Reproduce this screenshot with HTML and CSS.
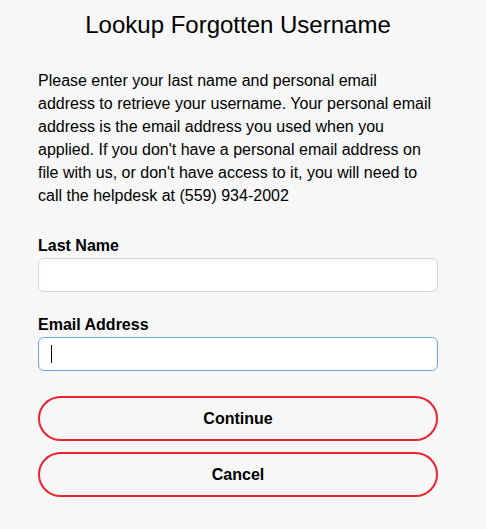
FILE: index.html
```html
<!DOCTYPE html>
<html>
<head>
<meta charset="utf-8">
<link rel="stylesheet" href="styles.css">
</head>
<body>
<main class="page">
  <h1 class="title">Lookup Forgotten Username</h1>
  <p class="intro">Please enter your last name and personal email address to retrieve your username. Your personal email address is the email address you used when you applied. If you don't have a personal email address on file with us, or don't have access to it, you will need to call the helpdesk at (559) 934-2002</p>
  <form class="form">
    <label class="field">
      <span class="label">Last Name</span>
      <span class="input"></span>
    </label>
    <label class="field">
      <span class="label">Email Address</span>
      <span class="input focused"><span class="caret"></span></span>
    </label>
    <div class="actions">
      <button type="button" class="btn">Continue</button>
      <button type="button" class="btn">Cancel</button>
    </div>
  </form>
</main>
</body>
</html>
```
FILE: styles.css
```css
html, body {
  margin: 0;
  padding: 0;
  background: #f7f7f7;
}
body {
  font-family: "Liberation Sans", Arial, sans-serif;
  color: #000;
}
.page {
  width: 400px;
  margin: 0 0 0 38px;
  padding: 9px 0 0 0;
}
.title {
  margin: 0;
  font-size: 24px;
  font-weight: normal;
  text-align: center;
  line-height: 32px;
}
.intro {
  margin: 28px 0 0 0;
  font-size: 16px;
  line-height: 23px;
}
.form {
  margin-top: 29px;
  display: flex;
  flex-direction: column;
}
.field {
  display: flex;
  flex-direction: column;
  margin-bottom: 23px;
}
.label {
  font-weight: bold;
  font-size: 16px;
  line-height: 19px;
  margin-bottom: 3px;
}
.input {
  display: flex;
  align-items: center;
  box-sizing: border-box;
  height: 34px;
  background: #fff;
  border: 1px solid #cdd6e3;
  border-radius: 6px;
  padding: 0 12px;
}
.input.focused {
  border-color: #6ba6e3;
}
.caret {
  width: 1px;
  height: 18px;
  background: #000;
}
.actions {
  display: flex;
  flex-direction: column;
  gap: 11px;
  margin-top: 2px;
}
.btn {
  box-sizing: border-box;
  height: 45px;
  width: 100%;
  background: transparent;
  border: 2px solid #ec2330;
  border-radius: 23px;
  font-family: "Liberation Sans", Arial, sans-serif;
  font-weight: bold;
  font-size: 16px;
  color: #000;
  cursor: pointer;
}
```
